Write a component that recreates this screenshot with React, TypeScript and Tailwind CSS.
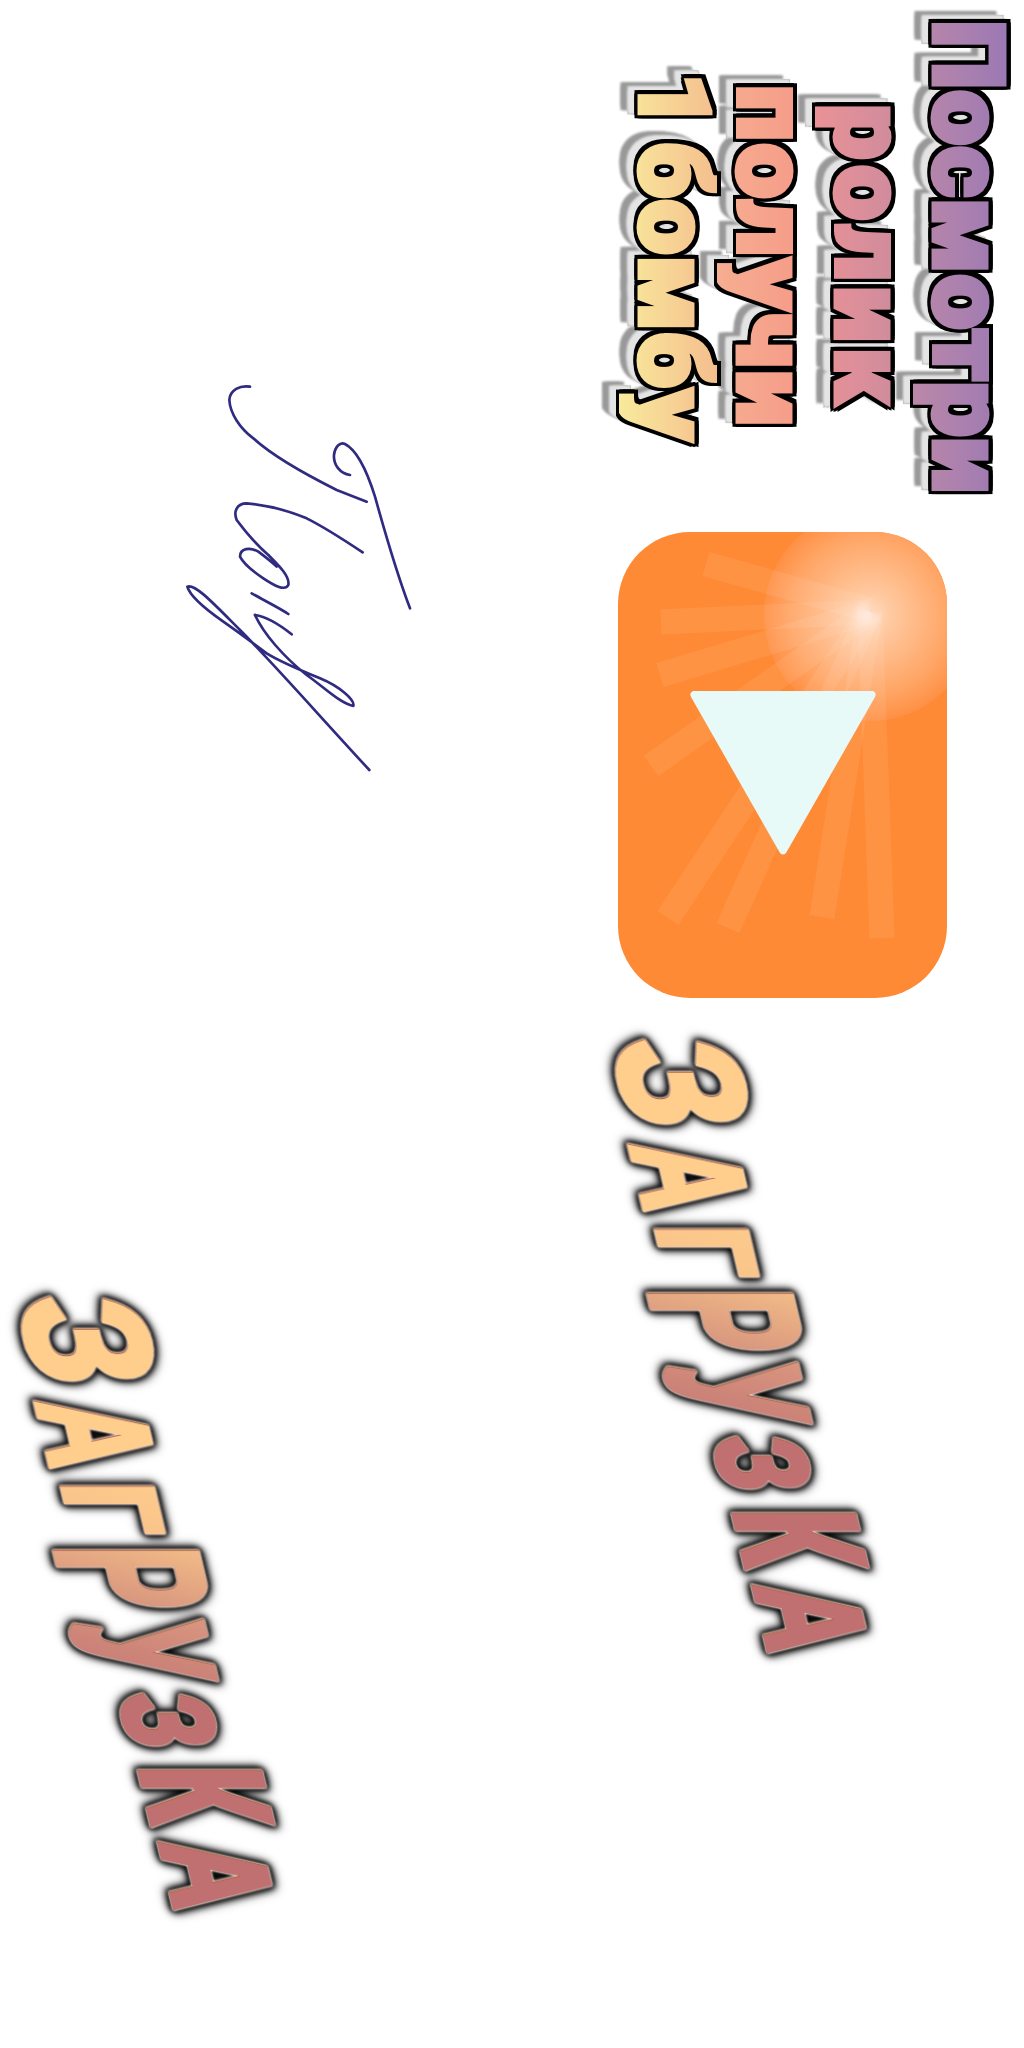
const LINES = [
  { text: "Посмотри", cls: "from-[#9a78b4] to-[#bb88a8] tracking-[1px]" },
  { text: "ролик", cls: "from-[#c98a9e] to-[#ea9296] tracking-[6px]" },
  { text: "получи", cls: "from-[#f59888] to-[#f6ae90] tracking-[3px]" },
  { text: "1 бомбу", cls: "from-[#f4be8e] to-[#f8ea9c] tracking-[1px] [word-spacing:-14px]" },
];

// real text, uppercase through css, each letter squeezed on its own
const LETTERS = [
  { ch: "З", box: "w-[108px] translate-y-[-2px]", cls: "from-[#ffce8d] to-[#ffce8d] text-[172px] scale-x-[0.82]" },
  { ch: "а", box: "w-[81px] translate-y-[11px]", cls: "from-[#ffce8d] to-[#ffce8d] text-[150px] scale-x-[0.62]" },
  { ch: "г", box: "w-[64px] translate-y-[13px]", cls: "from-[#ffce8d] to-[#f5bd88] text-[128px] scale-x-[0.7]" },
  { ch: "р", box: "w-[74px] translate-y-[9px]", cls: "from-[#fbc88a] to-[#c88078] text-[205px] scale-x-[0.46]" },
  { ch: "у", box: "w-[73px] translate-y-[15px]", cls: "from-[#dc9c82] to-[#c07070] text-[190px] scale-x-[0.48]" },
  { ch: "з", box: "w-[68px] translate-y-[7px]", cls: "from-[#c07070] to-[#c07070] text-[125px] scale-x-[0.68]" },
  { ch: "к", box: "w-[81px] translate-y-[-12px]", cls: "from-[#c07070] to-[#c07070] text-[172px] scale-x-[0.56]" },
  { ch: "а", box: "w-[81px] translate-y-[-5px]", cls: "from-[#c07070] to-[#c07070] text-[142px] scale-x-[0.66]" },
];

function Loading({ cls }: { cls: string }) {
  return (
    <div
      className={`absolute flex h-[150px] w-[636px] items-center font-['Liberation_Sans',sans-serif] font-bold uppercase [transform:rotate(90deg)_skewY(-13.3deg)] [filter:drop-shadow(-1px_0_0.5px_#b0603f)_drop-shadow(0_0_1px_#fbe8e0)_drop-shadow(0_0_1px_#fbe8e0)_drop-shadow(0_0_2px_#000)_drop-shadow(0_0_3px_#000)_drop-shadow(0_0_4px_#000)] ${cls}`}
    >
      {LETTERS.map((l, i) => (
        <span key={i} className={`flex shrink-0 justify-center ${l.box}`}>
          <span
            className={`shrink-0 bg-linear-to-br bg-clip-text px-3 leading-[1.3] text-transparent [-webkit-text-stroke:6px_transparent] ${l.cls}`}
          >
            {l.ch}
          </span>
        </span>
      ))}
    </div>
  );
}

function PlayIcon() {
  return (
    <svg className="absolute left-[618px] top-[532px]" width="329" height="466" viewBox="618 532 329 466">
      <defs>
        <radialGradient id="glow" gradientUnits="userSpaceOnUse" cx="870" cy="615" r="106">
          <stop offset="0" stopColor="#ffdcc4" />
          <stop offset="0.2" stopColor="#ffc9a0" />
          <stop offset="0.75" stopColor="#ffa565" />
          <stop offset="1" stopColor="#ff9045" />
        </radialGradient>
        <clipPath id="box">
          <rect x="618" y="532" width="329" height="466" rx="72" />
        </clipPath>
      </defs>
      <rect x="618" y="532" width="329" height="466" rx="72" fill="#ff8a35" />
      <g clipPath="url(#box)">
        <circle cx="870" cy="615" r="106" fill="url(#glow)" />
      </g>
      <g stroke="#fff" strokeOpacity="0.08" strokeWidth="25" fill="none">
        <path d="M870 610 L706 564" />
        <path d="M870 612 L661 622" />
        <path d="M870 612 L660 675" />
        <path d="M870 612 L651 766" />
        <path d="M870 612 L668 918" />
        <path d="M870 612 L728 928" />
        <path d="M870 612 L822 917" />
        <path d="M870 612 L882 938" />
      </g>
      <path d="M693 691 H873 Q877 693 875 697 L786 853 Q783 856 780 853 L691 697 Q689 693 693 691 Z" fill="#e8faf8" />
    </svg>
  );
}

function Signature() {
  return (
    <svg
      className="absolute left-[140px] top-[300px]"
      width="300"
      height="500"
      viewBox="0 0 900 1500"
      fill="none"
      stroke="#2f2b80"
      strokeWidth="8"
      strokeLinecap="round"
      strokeLinejoin="round"
    >
      <path d="M330 260 C300 255 270 270 268 300 C270 340 300 385 340 415 C400 470 500 525 590 570 L680 605" />
      <path d="M630 525 C600 520 580 495 582 465 C585 440 600 425 615 432 C650 450 680 510 705 590 C730 680 770 820 810 925" />
      <path d="M668 757 C620 725 560 685 500 655 C440 630 380 615 320 610 C290 610 280 635 290 660 C320 700 350 735 385 765 C420 800 450 830 445 855 C435 875 400 855 370 835 C340 815 310 790 300 770 C300 745 330 740 355 755 C375 770 395 785 410 800" />
      <path d="M335 880 C370 900 420 925 445 942" />
      <path d="M345 945 C380 950 420 975 455 1003" />
      <path d="M345 945 C370 1000 430 1070 500 1125 C550 1160 600 1210 640 1218 C645 1200 600 1160 540 1135 C480 1110 420 1085 380 1060 C340 1030 300 1000 250 965 C200 930 150 890 142 860 C165 850 220 910 300 990 C400 1090 540 1250 688 1410" />
    </svg>
  );
}

export default function App() {
  return (
    <div className="relative h-[2048px] w-[1024px] overflow-hidden bg-white">
      {/* headline, turned a quarter clockwise */}
      <div className="absolute left-[565px] top-[61px] flex h-[392px] w-[500px] rotate-90 flex-col items-center font-['Roboto',sans-serif] font-black [filter:drop-shadow(3.5px_0_0_#000)_drop-shadow(-3.5px_0_0_#000)_drop-shadow(0_3.5px_0_#000)_drop-shadow(0_-3.5px_0_#000)_drop-shadow(-4px_7px_1px_#e4e4e4)_drop-shadow(-4px_7px_0_#999)]">
        {LINES.map((l) => (
          <div
            key={l.text}
            className={`h-[98px] bg-linear-to-b bg-clip-text px-2 pb-[10px] text-[98px] leading-[88px] whitespace-nowrap text-transparent [-webkit-text-stroke:5px_transparent] ${l.cls}`}
          >
            {l.text}
          </div>
        ))}
      </div>
      <PlayIcon />
      <Signature />
      <Loading cls="left-[424px] top-[1273px]" />
      <Loading cls="left-[-170px] top-[1530px]" />
    </div>
  );
}
